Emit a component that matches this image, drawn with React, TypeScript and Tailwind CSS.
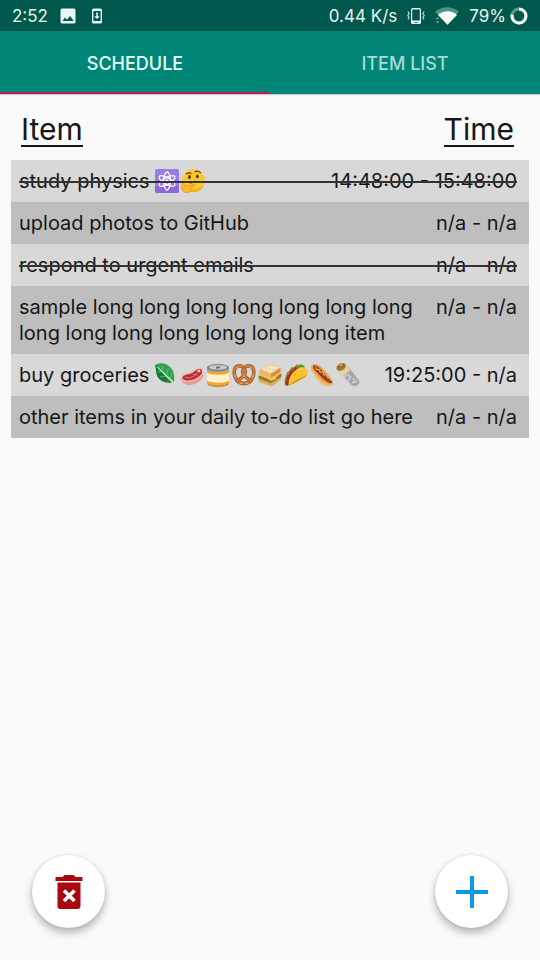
import { useState, type ReactNode } from "react";

type EmojiProps = { label: string; children: ReactNode };

function Emoji({ label, children }: EmojiProps) {
  return (
    <svg viewBox="0 0 24 24" role="img" aria-label={label} className="h-6 w-6 shrink-0">
      {children}
    </svg>
  );
}

const Atom = () => (
  <Emoji label="atom">
    <rect x="0" y="0" width="24" height="24" rx="2" fill="#9a7be8" />
    <path d="M0 17h24v5a2 2 0 0 1-2 2H2a2 2 0 0 1-2-2z" fill="#8a68dc" />
    <g fill="none" stroke="#fff" strokeWidth="1.3">
      <ellipse cx="12" cy="12" rx="3.3" ry="9" />
      <ellipse cx="12" cy="12" rx="3.3" ry="9" transform="rotate(60 12 12)" />
      <ellipse cx="12" cy="12" rx="3.3" ry="9" transform="rotate(120 12 12)" />
    </g>
    <circle cx="12" cy="12" r="1.7" fill="#fff" />
  </Emoji>
);

const Thinking = () => (
  <Emoji label="thinking">
    <circle cx="12.5" cy="11.5" r="11.3" fill="#fbc928" />
    <path d="M3 18a11.3 11.3 0 0 0 20-2c-5 5-13 6-20 2z" fill="#f5ac1c" />
    <ellipse cx="8.5" cy="8" rx="1.4" ry="1.9" fill="#4a3426" />
    <ellipse cx="16.3" cy="7.3" rx="1.4" ry="1.9" fill="#4a3426" />
    <path d="M5.5 4.8q2.200-1.500 4.500-.6M14 2.800q3-1.500 5.500.8M9.500 14q3.500-2.800 7-1" fill="none" stroke="#5c3a20" strokeWidth="1.200" strokeLinecap="round" />
    <path d="M1 15c1-1.500 2-.8 2.500.7l.7 1.600 8-1.900c2-.4 2.300 1.600.5 2.200l-3.500 1.200c2.500 1 1 4-1.500 4.600-3.500 1-6.700-.8-7-4z" fill="#fcb72b" stroke="#e59318" strokeWidth=".7" />
  </Emoji>
);

const Leaf = () => (
  <Emoji label="leafy green">
    <path d="M1 2C6-1 13 0 17 5c3.500 4 3.500 9 3 14.500C14 20 8 19.500 4.500 15 1.500 11 2.500 6 1 2z" fill="#2ea453" />
    <path d="M1 2c1.500 4 .5 9 3.500 13 3.500 4.500 9.500 5 15.500 4.500L4 4z" fill="#127a3b" />
    <path d="M3.500 4 24 23 19 20.500 4 5z" fill="#cfe8b5" stroke="#cfe8b5" strokeWidth=".8" />
    <path d="m8 8 1-5M12 12l2.500-6M7.500 8.500 3.500 9M12 13l-6 1M16 16l2-6" stroke="#78c477" strokeWidth=".8" />
  </Emoji>
);

const Meat = () => (
  <Emoji label="cut of meat">
    <path d="M1 13C0 19 5 23 11 22c6-1 12-5 12.500-10L22 9z" fill="#e7a093" />
    <path d="M1 13C3 9 9 10 12.500 7.500 16 4.500 21 3 23 6.500c2 5-4 9-9 11S0 19.500 1 13z" fill="#f0c3b5" />
    <path d="M2.500 14c2-3 7-2 11-5s7-4 8.500-1.500c1 4-3.500 7-8.500 8.900S2 18 2.500 14z" fill="#b72e3c" />
    <path d="M5 14c4 2 9 0 12.500-4.500M13 11l4 1" fill="none" stroke="#e06e70" strokeWidth="1.100" />
    <ellipse cx="19" cy="8" rx="1.600" ry="1.300" fill="#f5d7c7" />
  </Emoji>
);

const Can = () => (
  <Emoji label="canned food">
    <path d="M1 4.500v15.500c0 5 22 5 22 0V4.500z" fill="#f2a62a" />
    <path d="M1 8.500c3 3 19 3 22 0v9c-3 3-19 3-22 0z" fill="#fbf0cb" />
    <path d="M1 4.500v2.500c3 3 19 3 22 0V4.500z" fill="#9da3a5" />
    <path d="M1 7.500c3 3 19 3 22 0v2c-3 3-19 3-22 0z" fill="#f2a62a" />
    <ellipse cx="12" cy="4.500" rx="11" ry="3.500" fill="#788084" />
    <ellipse cx="12" cy="4.300" rx="9" ry="2.400" fill="#c7ccce" />
    <path d="M10 3.500h5l-2 2h-3z" fill="#686f73" />
    <path d="M1.500 21c4 3 17 3 21 0" fill="none" stroke="#a8853d" strokeWidth="1" />
  </Emoji>
);

const Pretzel = () => (
  <Emoji label="pretzel">
    <g fill="none" strokeLinecap="round">
      <path d="M12 5.500C9 1 2.500 2 2.200 9 2 15 6 20.500 12 20.500S22 15 21.800 9C21.500 2 15 1 12 5.500" stroke="#99501f" strokeWidth="3.600" />
      <path d="M12 5.500C9 1 2.500 2 2.200 9 2 15 6 20.500 12 20.500S22 15 21.800 9C21.500 2 15 1 12 5.500" stroke="#cc8145" strokeWidth="2.200" />
      <path d="M12 5.500c3.500 4.500 0 8-7 12.500M12 5.500c-3.500 4.500 0 8 7 12.500" stroke="#99501f" strokeWidth="3.200" />
      <path d="M12 5.500c3.500 4.500 0 8-7 12.500M12 5.500c-3.500 4.500 0 8 7 12.500" stroke="#cc8145" strokeWidth="2" />
      <path d="m5 4.500.5-.4M18.500 4.500l.5.400M3 13v.1M21 13v.1M12 13v.1M9 20.500h.1M15 20.500h.1" stroke="#f6dfbd" strokeWidth="1" />
    </g>
  </Emoji>
);

const Sandwich = () => (
  <Emoji label="sandwich">
    <path d="m1 15 12 5 10-7v4l-9.500 6.500L1 19z" fill="#e5ab62" />
    <path d="m.5 12.500 12.500 5L23.500 11v3L13 20.500.5 16z" fill="#5fa837" />
    <path d="m1 12 12 5 10-7v2.500l-10 6.500-12-5z" fill="#d94d32" />
    <path d="m1 10.500 12 5 10-7v2l-4 3-2 3-4 1.500-4-2.500-8-3z" fill="#fbc530" />
    <path d="M2 6.500 12 1.500l10.500 3V9L13 15 1.500 10.500z" fill="#d0904b" />
    <path d="M2 6.500 12 1.500l10.500 3-9.500 6z" fill="#f7dfb0" />
    <path d="m2 6.500 11 4v4.500L1.500 10.500z" fill="#e9b878" />
  </Emoji>
);

const Taco = () => (
  <Emoji label="taco">
    <path d="M1 22C-1 13 6 4 14 2c4-1 6 0 7 2L5 22z" fill="#5b9e34" />
    <path d="M1.500 22C1 14 6 7 12 4l2 2L4 23z" fill="#9c3526" />
    <path d="m3 10 2 1M7 5l2 2M12 2l2 2M1 16l2 1" stroke="#e94e38" strokeWidth="2" />
    <path d="M4.500 23C4 14 10 6 17 4.500c5-1 7.500 2 6.500 6C22 16 11 19 4.500 23z" fill="#f9c631" />
    <path d="M4.500 23C11 19 22 16 23.500 10.500 22 14 10 16 4.500 23z" fill="#d99219" />
    <path d="m11 12 1-1M16 8l1 1M18 12l1-1M10 16h1M14 14h.5" stroke="#d49319" strokeWidth="1" />
  </Emoji>
);

const HotDog = () => (
  <Emoji label="hot dog">
    <path d="M2 2C6-1 11 3 15 8s9 9 7.500 13.500C19 25 11 20 7 14S-1 6 2 2z" fill="#e6a052" />
    <path d="M4 2.500c4 0 7 4 10.500 8s8 6 7.500 9.500c-4 1-9-4-13-8.500S1 4.500 4 2.500z" fill="#9a3c21" />
    <path d="M1.500 3.500C3 9 7 12 10 16s8 5 11.500 5.500C18 26 10 21.500 6 15S0 7 1.500 3.500z" fill="#f3bd70" />
    <path d="m5.500 4 .8 2.500 3-.2.700 3 3-.2.700 3 3-.2.800 3 2.600.1.400 2.500" fill="none" stroke="#f8cb36" strokeWidth="1" />
  </Emoji>
);

const Burrito = () => (
  <Emoji label="burrito">
    <path d="M3 9 12 3.500l11 14c2 4-4 7-7 5z" fill="#a4a7aa" />
    <path d="m8 14 3-2M12 18l3-5M16 20l5-2M12 11l3 4M17 15l2 5" stroke="#dadcde" strokeWidth="1.200" />
    <path d="M1 6 9.500 1l5 7c-3 0-4 4-8 5z" fill="#edd0a0" />
    <ellipse cx="5.200" cy="3.900" rx="5.200" ry="3.600" transform="rotate(-30 5.200 3.900)" fill="#bb8448" />
    <ellipse cx="5.200" cy="3.900" rx="4.200" ry="2.600" transform="rotate(-30 5.200 3.900)" fill="#62902f" />
    <path d="m2 5 2-1M6 4l2-2" stroke="#d84b2b" strokeWidth="2" />
    <path d="m4.500 2.500 1.500-.5" stroke="#f9d048" strokeWidth="1.500" />
  </Emoji>
);

type Entry = { text: string; emoji?: ReactNode; time: string; done?: boolean };

const entries: Entry[] = [
  { text: "study physics", emoji: <><Atom /><Thinking /></>, time: "14:48:00 - 15:48:00", done: true },
  { text: "upload photos to GitHub", time: "n/a - n/a" },
  { text: "respond to urgent emails", time: "n/a - n/a", done: true },
  { text: "sample long long long long long long long long long long long long long long item", time: "n/a - n/a" },
  { text: "buy groceries", emoji: <><Leaf /><Meat /><Can /><Pretzel /><Sandwich /><Taco /><HotDog /><Burrito /></>, time: "19:25:00 - n/a" },
  { text: "other items in your daily to-do list go here", time: "n/a - n/a" },
];

function StatusBar() {
  return (
    <header className="flex h-[31px] items-center justify-between bg-[#00574b] px-3 text-[17px] leading-5 text-[#e6f4f1]">
      <div className="flex items-center">
        <span>2:52</span>
        <svg viewBox="0 0 16 16" className="ml-3 h-4 w-4" aria-hidden="true">
          <path fillRule="evenodd" fill="#e8f7f5" d="M2 .5h12A1.500 1.500 0 0 1 15.500 2v12a1.500 1.500 0 0 1-1.500 1.500H2A1.500 1.500 0 0 1 .5 14V2A1.500 1.500 0 0 1 2 .5zM2.500 13h11.300L10 8l-3 3.800-2-2.300z" />
        </svg>
        <svg viewBox="0 0 10 16" className="ml-4 h-4 w-[10px]" aria-hidden="true">
          <path fillRule="evenodd" fill="#e8f7f5" d="M1.500.5h7A1.500 1.500 0 0 1 10 2v12a1.500 1.500 0 0 1-1.500 1.500h-7A1.500 1.500 0 0 1 0 14V2A1.500 1.500 0 0 1 1.500.500zM1.400 3v10h7.200V3zM4.200 4.500h1.600v3.800h2L5 11 2.200 8.300h2z" />
        </svg>
      </div>
      <div className="flex items-center">
        <span>0.44 K/s</span>
        <svg viewBox="0 0 18 18" className="ml-[10px] h-[18px] w-[18px]" aria-hidden="true">
          <path fillRule="evenodd" fill="#e8f7f5" d="M5.500 1h7A1.500 1.500 0 0 1 14 2.500v13a1.500 1.500 0 0 1-1.500 1.500h-7A1.500 1.500 0 0 1 4 15.500v-13A1.500 1.500 0 0 1 5.500 1zM5.200 2.500v11h7.600v-11zM7.500 15v.8h3V15z" />
          <path d="m.8 4.500 1.400 2-1.400 2 1.400 2-1.400 2M17.200 4.500l-1.400 2 1.400 2-1.400 2 1.400 2" fill="none" stroke="#c5e0dc" strokeWidth="1.200" />
        </svg>
        <svg viewBox="0 0 24 18" className="ml-[10px] h-[18px] w-6" aria-hidden="true">
          <path fill="#4d9389" d="M0 4.700c7-6 17-6 24 0L12.500 17.500z" />
          <path fill="#fff" d="M3 8c5.500-5 13.500-5 19 0l-9.500 9.800z" />
          <path fill="#6aa79e" stroke="#00574b" strokeWidth=".6" d="m0 12.500 2.500-2.800L5 12.500zM0 14l2.500 2.800L5 14z" />
        </svg>
        <span className="ml-[10px]">79%</span>
        <svg viewBox="0 0 18 18" className="ml-1 h-[18px] w-[18px]" aria-hidden="true">
          <circle cx="9" cy="9" r="7" fill="none" stroke="#5b9b91" strokeWidth="3" />
          <path d="M9 2a7 7 0 1 1-6.900 5.700" fill="none" stroke="#fff" strokeWidth="3" />
        </svg>
      </div>
    </header>
  );
}

export default function App() {
  const [tab, setTab] = useState("SCHEDULE");
  return (
    <div className="flex min-h-screen flex-col bg-[#fafafa] font-[Inter,Roboto,sans-serif] text-[#161616]">
      <StatusBar />
      <nav role="tablist" className="grid grid-cols-2 bg-[#008577] shadow-[0_1px_1px_rgba(0,0,0,0.18)]">
        {["SCHEDULE", "ITEM LIST"].map((name) => (
          <button
            key={name}
            type="button"
            role="tab"
            aria-selected={tab === name}
            onClick={() => setTab(name)}
            className={
              tab === name
                ? "h-[63px] border-b-2 border-[#b81b60] pt-1 text-lg font-medium text-[#e9fffb]"
                : "h-[63px] border-b-2 border-transparent pt-1 text-lg font-medium text-[#a6dbd3]"
            }
          >
            {name}
          </button>
        ))}
      </nav>
      <main className="flex grow flex-col px-[11px] pt-5">
        <table className="block w-full">
          <thead className="block">
            <tr className="flex justify-between px-[10px] pb-[13px] text-[30px] leading-[31px]">
              <th scope="col" className="border-b-2 border-[#161616] font-normal">Item</th>
              <th scope="col" className="mr-[5px] border-b-2 border-[#161616] font-normal">Time</th>
            </tr>
          </thead>
          <tbody className="block">
            {entries.map((entry) => (
              <tr
                key={entry.text}
                className={
                  entry.done
                    ? "relative flex justify-between gap-4 px-2 py-2 text-xl leading-[26px] odd:bg-[#d8d8d8] even:bg-[#bebebe] after:absolute after:top-[21px] after:right-3 after:left-2 after:h-[2px] after:bg-[#333333]"
                    : "flex justify-between gap-4 px-2 py-2 text-xl leading-[26px] odd:bg-[#d8d8d8] even:bg-[#bebebe]"
                }
              >
                <td className="flex items-center">
                  {entry.text}
                  {entry.emoji && <span className="ml-[5px] flex gap-[2px]">{entry.emoji}</span>}
                </td>
                <td className="mr-1 shrink-0">{entry.time}</td>
              </tr>
            ))}
          </tbody>
        </table>
      </main>
      <footer className="flex justify-between px-8 pb-8">
        <button type="button" aria-label="Delete all items" className="flex size-[73px] items-center justify-center rounded-full bg-white shadow-[0_5px_9px_rgba(0,0,0,0.28),0_0_3px_rgba(0,0,0,0.12)]">
          <svg viewBox="0 0 28 36" className="h-9 w-7" aria-hidden="true">
            <path fill="#a8080f" d="M.5 3h7l2-2h9l2 2h7v4H.5zM2.500 8.500h23V32a3 3 0 0 1-3 3h-17a3 3 0 0 1-3-3z" />
            <path d="m9 16.500 10.500 10.500M19.500 16.500 9 27" stroke="#fff" strokeWidth="3.600" />
          </svg>
        </button>
        <button type="button" aria-label="Add item" className="flex size-[73px] items-center justify-center rounded-full bg-white shadow-[0_5px_9px_rgba(0,0,0,0.28),0_0_3px_rgba(0,0,0,0.12)]">
          <svg viewBox="0 0 32 32" className="size-8" aria-hidden="true">
            <path fill="#0a9ce0" d="M14 0h4v14h14v4H18v14h-4V18H0v-4h14z" />
          </svg>
        </button>
      </footer>
    </div>
  );
}
